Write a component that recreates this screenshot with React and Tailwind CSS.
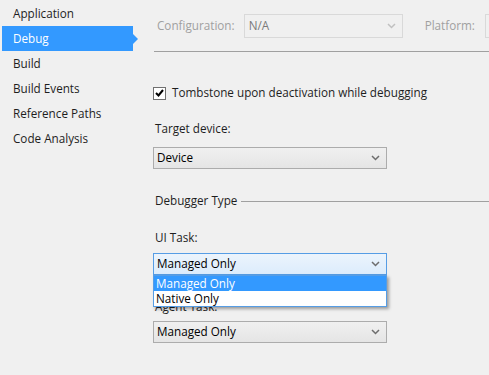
import React from 'react';

const Chevron = ({ color = '#6d6d6d' }) => (
  <svg width="9" height="6" viewBox="0 0 9 6" className="shrink-0">
    <path d="M1 1 L4.5 4.5 L8 1" fill="none" stroke={color} strokeWidth="1.5" />
  </svg>
);

const Select = ({ value, active }) => (
  <div
    className={`flex items-center justify-between w-[234px] h-[22px] pl-[3px] pr-[6px] border ${
      active
        ? 'border-[#569de5] bg-gradient-to-b from-[#ecf4fc] to-[#dcecfc]'
        : 'border-[#acacac] bg-gradient-to-b from-[#f0f0f0] to-[#e5e5e5]'
    }`}
  >
    <span className="text-black">{value}</span>
    <Chevron />
  </div>
);

const navItems = ['Application', 'Debug', 'Build', 'Build Events', 'Reference Paths', 'Code Analysis'];

export default function App() {
  return (
    <div
      className="w-[489px] h-[375px] bg-[#f0f0f0] flex overflow-hidden text-[11.7px] text-[#1e1e1e]"
      style={{ fontFamily: '"Open Sans", "Noto Sans", sans-serif' }}
    >
      <div className="w-[141px] shrink-0 pt-[1px] flex flex-col">
        {navItems.map((item) =>
          item === 'Debug' ? (
            <div key={item} className="relative h-[25px] ml-[2px] w-[131px] bg-[#3399ff] text-white flex items-center pl-[11px]">
              {item}
              <div className="absolute right-[-5px] top-[8px] w-0 h-0 border-y-[5px] border-y-transparent border-l-[5px] border-l-[#3399ff]" />
            </div>
          ) : (
            <div key={item} className="h-[25px] flex items-center pl-[13px]">
              {item}
            </div>
          )
        )}
      </div>

      <div className="flex-1 flex flex-col">
        <div className="flex items-center h-[52px] pt-[1px] border-b border-[#a0a0a0] ml-[13px] whitespace-nowrap">
          <span className="text-[#a0a0a0] ml-[3px]">Configuration:</span>
          <div className="ml-[9px] w-[159px] h-[24px] border border-[#d9d9d9] flex items-center justify-between pl-[4px] pr-[6px]">
            <span className="text-[#7a7a7a]">N/A</span>
            <Chevron color="#c0c0c0" />
          </div>
          <span className="text-[#a0a0a0] ml-[22px]">Platform:</span>
          <div className="ml-[10px] w-[60px] h-[24px] border border-[#d9d9d9]" />
        </div>

        <div className="pl-[12px] flex flex-col">
          <div className="flex items-center mt-[34px] h-[14px]">
            <div className="w-[13px] h-[13px] bg-white border border-[#707070] flex items-center justify-center">
              <svg width="9" height="8" viewBox="0 0 9 8">
                <path d="M1 4 L3.5 6.5 L8 1" fill="none" stroke="#000" strokeWidth="2" />
              </svg>
            </div>
            <span className="ml-[6px]">Tombstone upon deactivation while debugging</span>
          </div>

          <div className="mt-[21px] pl-[2px] h-[16px] flex items-center">Target device:</div>
          <div className="mt-[10px]">
            <Select value="Device" />
          </div>

          <div className="mt-[24px] flex items-center h-[16px]">
            <span className="pl-[2px]">Debugger Type</span>
            <div className="flex-1 h-px bg-[#a0a0a0] ml-[4px]" />
          </div>

          <div className="mt-[21px] pl-[2px] h-[16px] flex items-center">UI Task:</div>
          <div className="mt-[7px] relative">
            <Select value="Managed Only" active />
            <div className="absolute left-0 top-[22px] w-[234px] border border-[#569de5] bg-white shadow-[2px_2px_3px_rgba(0,0,0,0.35)] z-10">
              <div className="h-[15px] bg-[#3399ff] text-white flex items-center pl-[2px]">Managed Only</div>
              <div className="h-[15px] text-black flex items-center pl-[2px]">Native Only</div>
            </div>
          </div>

          <div className="mt-[24px] pl-[2px] h-[16px] flex items-center">Agent Task:</div>
          <div className="mt-[6px]">
            <Select value="Managed Only" />
          </div>
        </div>
      </div>
    </div>
  );
}
